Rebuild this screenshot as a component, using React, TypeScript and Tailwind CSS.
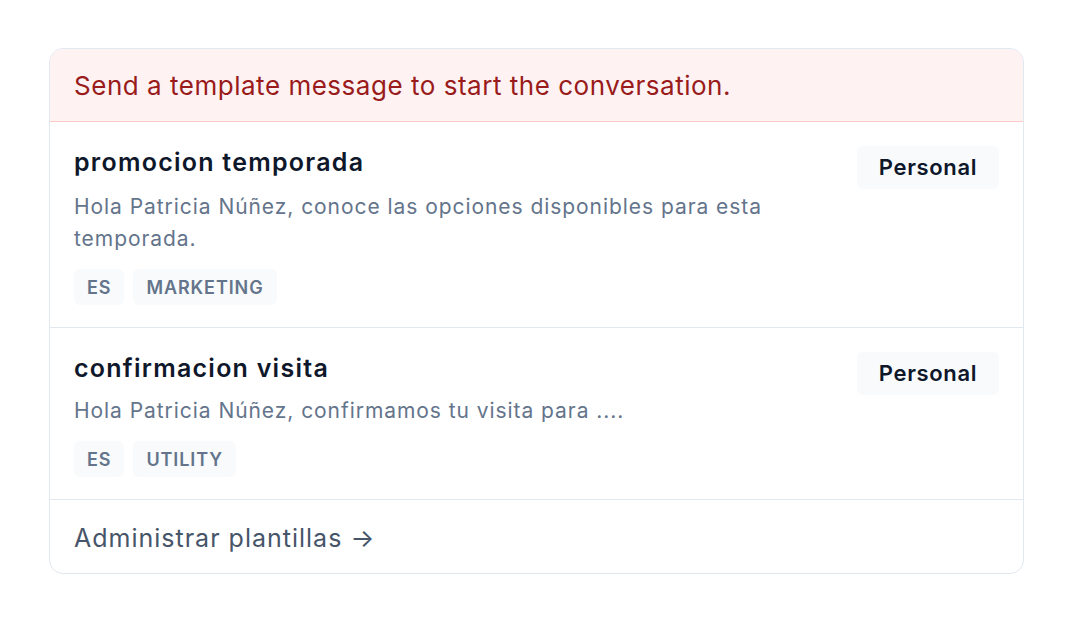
import React from 'react';

type Template = {
  name: string;
  body: string;
  lang: string;
  category: string;
};

const templates: Template[] = [
  {
    name: 'promocion temporada',
    body: 'Hola Patricia Núñez, conoce las opciones disponibles para esta temporada.',
    lang: 'ES',
    category: 'MARKETING',
  },
  {
    name: 'confirmacion visita',
    body: 'Hola Patricia Núñez, confirmamos tu visita para ....',
    lang: 'ES',
    category: 'UTILITY',
  },
];

const Tag: React.FC<{ label: string }> = ({ label }) => (
  <span className="h-9 px-[13px] flex items-center rounded-md bg-[#f8fafc] text-[18px] font-semibold tracking-[0.05em] text-[#64748b]">
    {label}
  </span>
);

const TemplateRow: React.FC<{ t: Template; first: boolean }> = ({ t, first }) => (
  <div className="flex items-start gap-6 px-6 pt-6 pb-[22px] border-b border-[#e2e8f0]">
    <div className="flex-1 min-w-0">
      <div className="text-[25px] leading-8 font-semibold tracking-[0.05em] text-[#0f172a]">{t.name}</div>
      <p className={`${first ? 'mt-[13px]' : 'mt-[11px]'} text-[21px] leading-8 tracking-[0.045em] text-[#64748b]`}>
        {t.body}
      </p>
      <div className="mt-[14px] flex gap-[9px]">
        <Tag label={t.lang} />
        <Tag label={t.category} />
      </div>
    </div>
    <span className="shrink-0 h-[43px] w-[142px] flex items-center justify-center rounded-md bg-[#f8fafc] text-[22px] font-semibold tracking-[0.03em] text-[#0f172a]">
      Personal
    </span>
  </div>
);

export default function App() {
  return (
    <div className="min-h-screen bg-white pl-[49px] pt-[48px]" style={{ fontFamily: 'Inter, "Noto Sans", sans-serif' }}>
      <div className="w-[975px] rounded-[14px] border border-[#e2e8f0] bg-white overflow-hidden">
        <div className="px-6 pt-5 pb-[19px] bg-[#fef2f2] border-b border-[#fecaca] text-[26px] leading-[33px] tracking-[0.02em] text-[#991b1b]">
          Send a template message to start the conversation.
        </div>
        {templates.map((t, i) => (
          <TemplateRow key={t.name} t={t} first={i === 0} />
        ))}
        <div className="px-6 pt-6 pb-[21px] text-[25px] leading-7 tracking-[0.04em] text-[#475569]">
          Administrar plantillas →
        </div>
      </div>
    </div>
  );
}
